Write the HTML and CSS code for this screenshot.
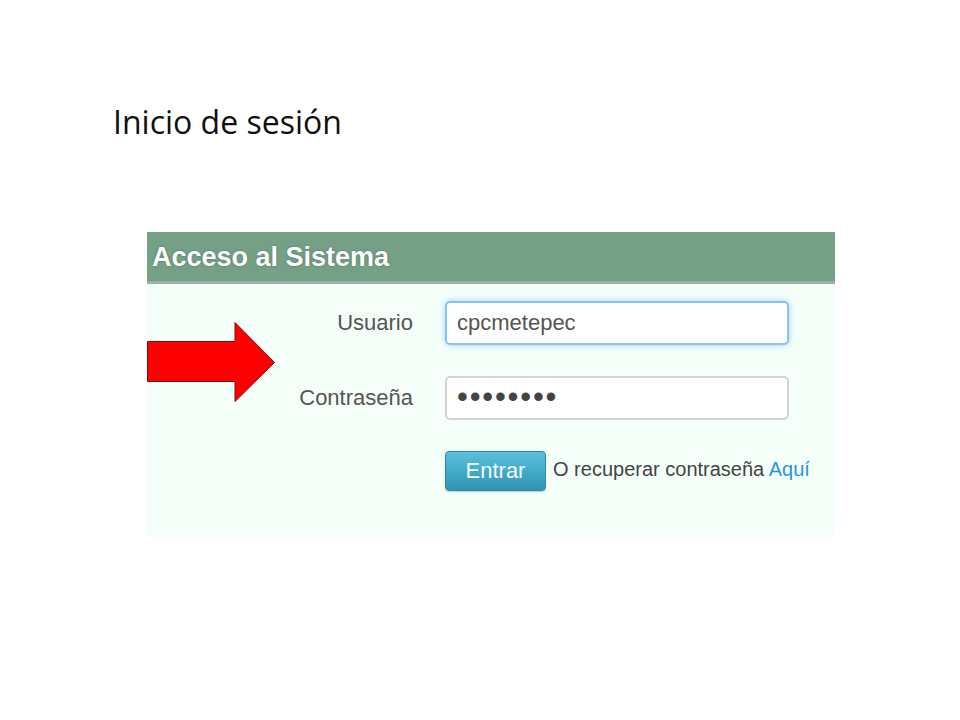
FILE: index.html
```html
<!DOCTYPE html>
<html>
  <head>
    <title>Inicio de sesión</title>
    <link rel="stylesheet" href="styles.css">
  </head>
  <body>
    <h1 class="slide-title">Inicio de sesión</h1>

    <div class="panel">
      <div class="panel-head">Acceso al Sistema</div>
      <form class="panel-body" action="">
        <label class="field-label" for="user">Usuario</label>
        <input id="user" class="field focus" value="cpcmetepec" autocomplete="off" />
        <label class="field-label" for="pass">Contraseña</label>
        <input id="pass" class="field" type="password" value="12345678" />
        <div class="actions">
          <button class="btn-enter">Entrar</button>
          <span class="recover">O recuperar contraseña <a href="#">Aquí</a></span>
        </div>
      </form>

      <svg class="arrow" width="130" height="82" viewBox="0 0 130 82">
        <polygon points="0.5,19.5 88,19.5 88,0.5 127.5,40.5 88,79.5 88,59.5 0.5,59.5" fill="#ff0000" stroke="#7a1010" stroke-width="1" />
      </svg>
    </div>
  </body>
</html>
```

FILE: styles.css
```css
body { margin: 0; background: #fff; font-family: "Liberation Sans", Arial, sans-serif; }

.slide-title { margin: 0; padding: 100px 0 0 113px; height: 232px; box-sizing: border-box; font-family: "Open Sans", sans-serif; font-weight: 400; font-size: 32px; line-height: 44px; color: #111; }

.panel { position: relative; width: 688px; margin: 0 0 0 147px; background: #f5fff9; }
.panel-head { height: 52px; box-sizing: border-box; padding: 7px 0 0 5px; background: #74a086; border-bottom: 3px solid #9fb0a6; color: #fff; font-size: 27px; font-weight: bold; line-height: 36px; text-shadow: 0 0 2px rgba(0, 0, 0, 0.35); }

.panel-body { display: grid; grid-template-columns: 266px 344px; column-gap: 32px; row-gap: 31px; align-items: center; padding: 17px 0 46px 0; }

.field-label { text-align: right; font-size: 22px; color: #555; }
.field { height: 44px; box-sizing: border-box; border: 2px solid #d2d2d2; border-radius: 5px; background: #fff; padding: 0 10px; font-family: "Liberation Sans", Arial, sans-serif; font-size: 22px; color: #555; }
.field.focus { border-color: #8cc0ee; box-shadow: 0 0 6px rgba(102, 175, 233, 0.6); outline: none; }
#pass { font-size: 31px; letter-spacing: 1.8px; color: #444; padding: 0 10px 2px 10px; }

.actions { grid-column: 2; display: flex; align-items: center; gap: 7px; white-space: nowrap; }
.btn-enter { flex: none; width: 101px; height: 40px; border: 1px solid #2a8bab; border-radius: 4px; background: linear-gradient(#5bbfdd, #2f95b3); color: #f2fbff; font-family: "Liberation Sans", Arial, sans-serif; font-size: 22px; box-shadow: 0 1px 1px rgba(0, 0, 0, 0.2); }
.recover { font-size: 20px; color: #444; margin-top: -4px; }
.recover a { color: #2c96d4; text-decoration: none; }

.arrow { position: absolute; left: 0; top: 90px; }
```
